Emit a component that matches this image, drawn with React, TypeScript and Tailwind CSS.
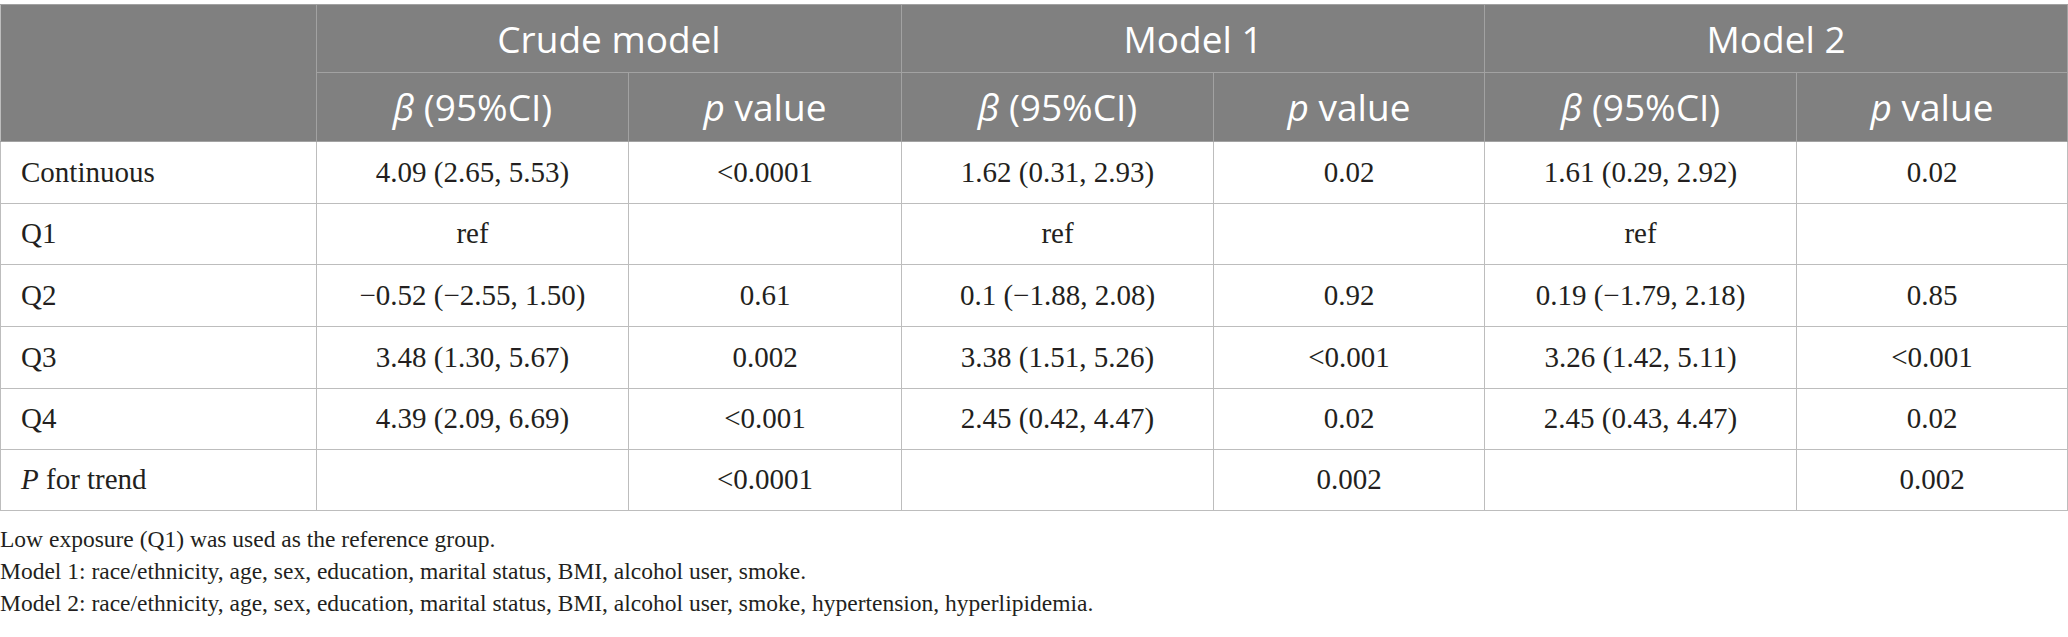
import React from "react";

const rows: { label: React.ReactNode; cells: string[]; h: string }[] = [
  { label: "Continuous", cells: ["4.09 (2.65, 5.53)", "<0.0001", "1.62 (0.31, 2.93)", "0.02", "1.61 (0.29, 2.92)", "0.02"], h: "h-[62px]" },
  { label: "Q1", cells: ["ref", "", "ref", "", "ref", ""], h: "h-[61px]" },
  { label: "Q2", cells: ["\u22120.52 (\u22122.55, 1.50)", "0.61", "0.1 (\u22121.88, 2.08)", "0.92", "0.19 (\u22121.79, 2.18)", "0.85"], h: "h-[62px]" },
  { label: "Q3", cells: ["3.48 (1.30, 5.67)", "0.002", "3.38 (1.51, 5.26)", "<0.001", "3.26 (1.42, 5.11)", "<0.001"], h: "h-[62px]" },
  { label: "Q4", cells: ["4.39 (2.09, 6.69)", "<0.001", "2.45 (0.42, 4.47)", "0.02", "2.45 (0.43, 4.47)", "0.02"], h: "h-[61px]" },
  { label: <><i>P</i> for trend</>, cells: ["", "<0.0001", "", "0.002", "", "0.002"], h: "h-[61px]" },
];

function BetaHead() {
  return (
    <th className="border border-[#a2a2a2] font-normal p-0 align-middle text-center">
      <i>β</i> (95%CI)
    </th>
  );
}
function PHead() {
  return (
    <th className="border border-[#a2a2a2] font-normal p-0 align-middle text-center">
      <i>p</i> value
    </th>
  );
}

export default function App() {
  return (
    <div className="bg-white w-[2068px] min-h-[637px] pt-[4px]">
      <table className="table-fixed border-collapse w-[2067px] border border-[#bdbdbd]">
        <colgroup>
          <col className="w-[316px]" />
          <col className="w-[312px]" />
          <col className="w-[273px]" />
          <col className="w-[312px]" />
          <col className="w-[271px]" />
          <col className="w-[312px]" />
          <col className="w-[271px]" />
        </colgroup>
        <thead className="bg-[#808080] text-white font-['Open_Sans',sans-serif] text-[37px]">
          <tr className="h-[68px]">
            <th rowSpan={2} className="border border-[#a2a2a2] border-l-[#bdbdbd] p-0"></th>
            <th colSpan={2} className="border border-[#a2a2a2] font-normal p-0 align-middle text-center">Crude model</th>
            <th colSpan={2} className="border border-[#a2a2a2] font-normal p-0 align-middle text-center">Model 1</th>
            <th colSpan={2} className="border border-[#a2a2a2] font-normal p-0 align-middle text-center">Model 2</th>
          </tr>
          <tr className="h-[69px]">
            <BetaHead />
            <PHead />
            <BetaHead />
            <PHead />
            <BetaHead />
            <PHead />
          </tr>
        </thead>
        <tbody className="font-['Liberation_Serif',serif] text-[29px] text-[#231f20]">
          {rows.map((r, i) => (
            <tr key={i} className={r.h}>
              <td className="border border-[#bdbdbd] pl-[20px] p-0 align-middle text-left">{r.label}</td>
              {r.cells.map((c, j) => (
                <td key={j} className="border border-[#bdbdbd] p-0 align-middle text-center">{c}</td>
              ))}
            </tr>
          ))}
        </tbody>
      </table>
      <div className="mt-[12px] font-['Liberation_Serif',serif] text-[23.5px] leading-[32px] text-[#231f20]">
        <p>Low exposure (Q1) was used as the reference group.</p>
        <p>Model 1: race/ethnicity, age, sex, education, marital status, BMI, alcohol user, smoke.</p>
        <p>Model 2: race/ethnicity, age, sex, education, marital status, BMI, alcohol user, smoke, hypertension, hyperlipidemia.</p>
      </div>
    </div>
  );
}
